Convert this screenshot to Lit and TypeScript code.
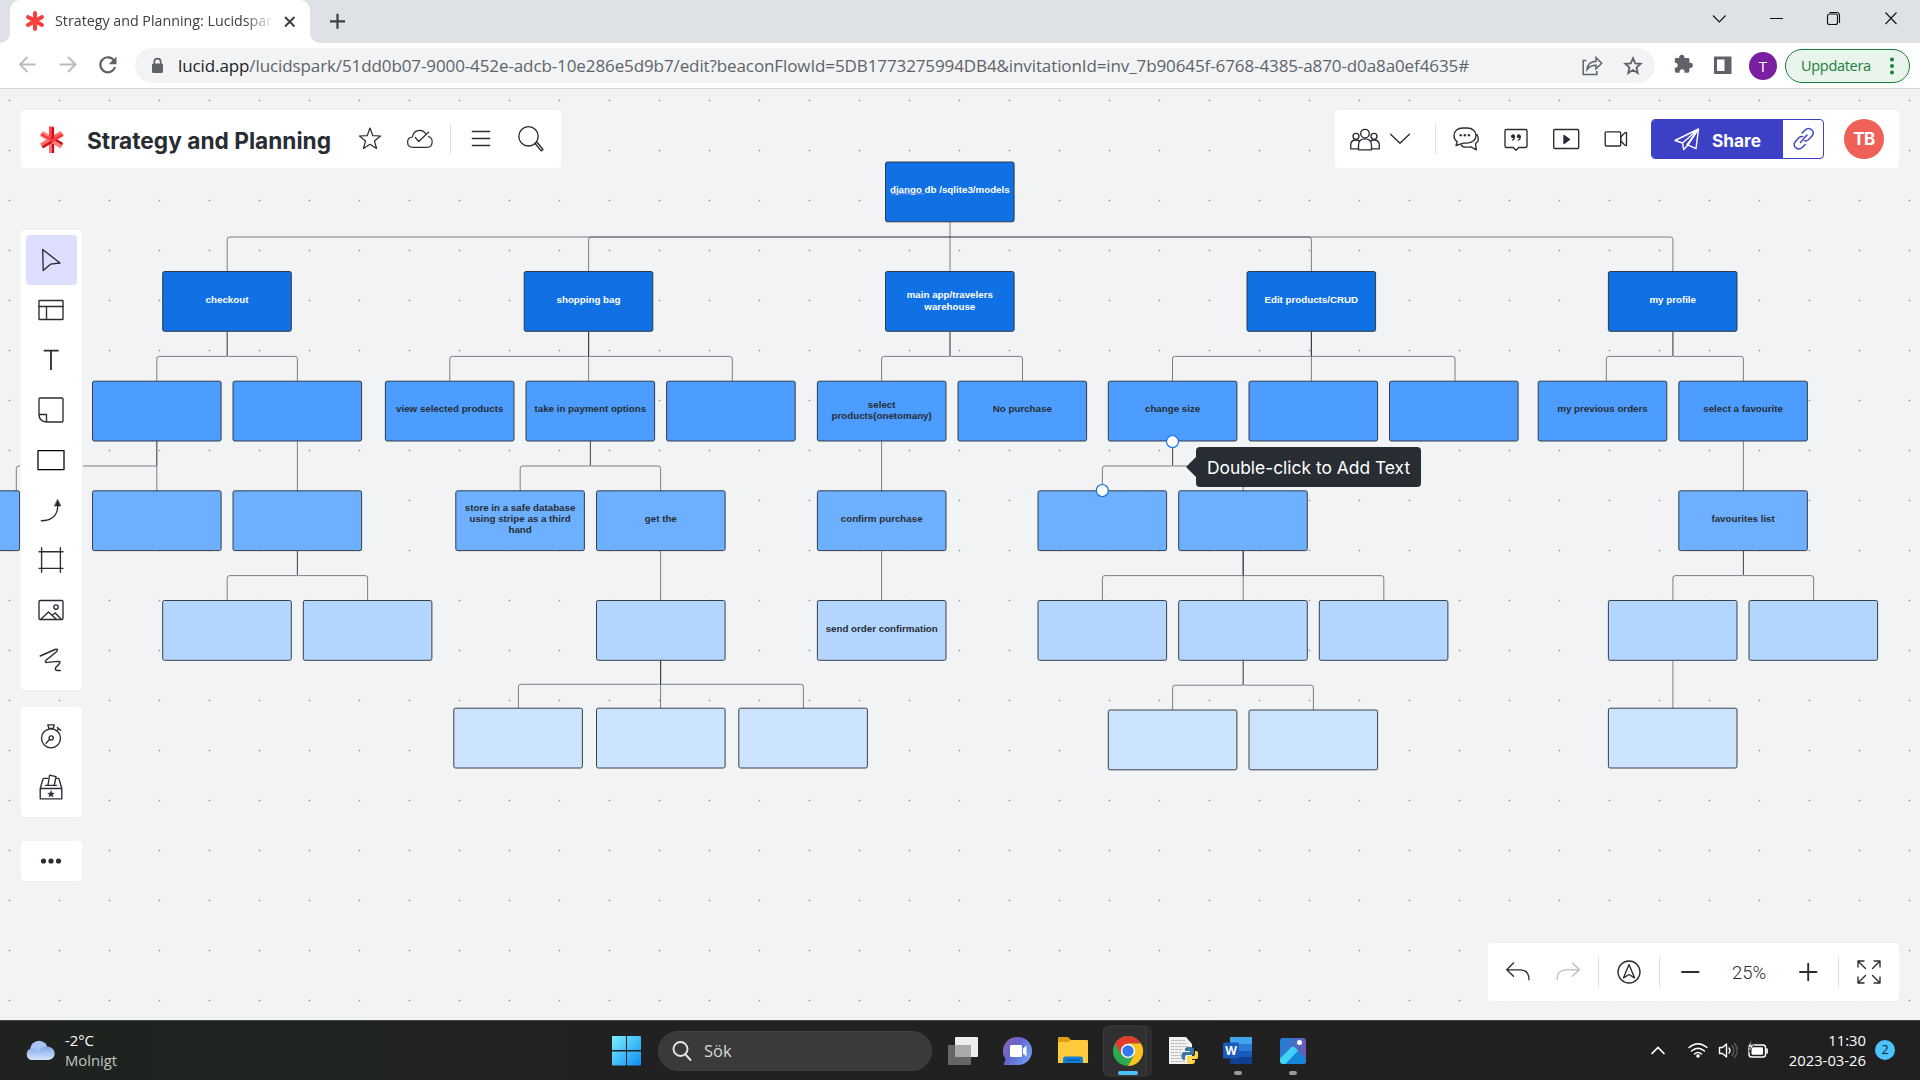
import { LitElement, html, css, svg } from "lit";
import { customElement } from "lit/decorators.js";

type Node = [x: number, y: number, level: number, lines?: string[]];

const W = 128.6;
const H = 59.8;
const FILLS = ["#1071e5", "#1071e5", "#4c9dff", "#6db0ff", "#b3d6ff", "#cde4ff"];
const BASE: Record<number, number[]> = { 1: [31.2], 2: [26.7, 38], 3: [19.7, 31, 42.6] };

const nodes: Node[] = [
  [885.5, 162, 0, ["django db /sqlite3/models"]],
  [162.7, 271.5, 1, ["checkout"]],
  [524.2, 271.5, 1, ["shopping bag"]],
  [885.5, 271.5, 1, ["main app/travelers", "warehouse"]],
  [1247, 271.5, 1, ["Edit products/CRUD"]],
  [1608.4, 271.5, 1, ["my profile"]],
  [92.5, 381.2, 2],
  [233, 381.2, 2],
  [385.4, 381.2, 2, ["view selected products"]],
  [526, 381.2, 2, ["take in payment options"]],
  [666.6, 381.2, 2],
  [817.4, 381.2, 2, ["select", "products(onetomany)"]],
  [958, 381.2, 2, ["No purchase"]],
  [1108.3, 381.2, 2, ["change size"]],
  [1249, 381.2, 2],
  [1389.5, 381.2, 2],
  [1538.2, 381.2, 2, ["my previous orders"]],
  [1678.8, 381.2, 2, ["select a favourite"]],
  [-109, 490.8, 3],
  [92.5, 490.8, 3],
  [233, 490.8, 3],
  [455.8, 490.8, 3, ["store in a safe database", "using stripe as a third", "hand"]],
  [596.5, 490.8, 3, ["get the"]],
  [817.4, 490.8, 3, ["confirm purchase"]],
  [1038, 490.8, 3],
  [1178.7, 490.8, 3],
  [1678.8, 490.8, 3, ["favourites list"]],
  [162.7, 600.5, 4],
  [303.3, 600.5, 4],
  [596.5, 600.5, 4],
  [817.4, 600.5, 4, ["send order confirmation"]],
  [1038, 600.5, 4],
  [1178.7, 600.5, 4],
  [1319.3, 600.5, 4],
  [1608.4, 600.5, 4],
  [1749, 600.5, 4],
  [453.8, 708.2, 5],
  [596.5, 708.2, 5],
  [738.8, 708.2, 5],
  [1108.3, 710, 5],
  [1249, 710, 5],
  [1608.4, 708.2, 5],
];

// [parent centre x, parent bottom, bus y, child top, child centre xs]
const links: [number, number, number, number, number[]][] = [
  [950, 222, 237, 271.5, [950]],
  [950, 237, 237, 271.5, [227.2, 588.6, 1311.4, 1672.9]],
  [227.2, 331.5, 356.4, 381, [156.8, 297.4]],
  [588.6, 331.5, 356.4, 381, [449.8, 588.6, 732.3]],
  [950, 331.5, 356.4, 381, [881.6, 1022.5]],
  [1311.4, 331.5, 356.4, 381, [1172.5, 1311.4, 1455]],
  [1672.9, 331.5, 356.4, 381, [1606.3, 1743.4]],
  [156.8, 441, 466, 491, [16.3, 156.8]],
  [297.4, 441, 466, 491, [297.4]],
  [590.4, 441, 466, 491, [520.2, 660.6]],
  [881.6, 441, 466, 491, [881.6]],
  [1172.6, 441, 466, 491, [1102.4, 1243.2]],
  [1743.4, 441, 466, 491, [1743.4]],
  [297.4, 551, 575.6, 600.5, [227.2, 367.6]],
  [660.6, 551, 575.6, 600.5, [660.6]],
  [881.6, 551, 575.6, 600.5, [881.6]],
  [1243.2, 551, 575.6, 600.5, [1102.4, 1243.2, 1383.8]],
  [1743.4, 551, 575.6, 600.5, [1672.9, 1813.6]],
  [660.6, 660.5, 684.3, 708.2, [518.4, 660.6, 803.4]],
  [1243.2, 660.5, 685.2, 710, [1172.6, 1313.4]],
  [1672.9, 660.5, 684.3, 708.2, [1672.9]],
];

const linkPath = (px: number, y0: number, bus: number, y1: number, cx: number) => {
  if (Math.abs(px - cx) < 1) return `M${px} ${y0}V${y1}`;
  const d = cx > px ? 2.5 : -2.5;
  const start = y0 < bus ? `M${px} ${y0}V${bus - 1}Q${px} ${bus} ${px + d / 2.5} ${bus}` : `M${px} ${bus}`;
  return `${start}H${cx - d}Q${cx} ${bus} ${cx} ${bus + 2.5}V${y1}`;
};

const ic = (body: unknown, w = 50, h = 50) =>
  html`<svg class="ic" width=${w} height=${h} viewBox="0 0 ${w} ${h}" fill="none" stroke="#282c33" stroke-width="1.35" stroke-linecap="round" stroke-linejoin="round">${body}</svg>`;

const sheet = css`
  :host { display: block; }
  * { box-sizing: border-box; }
  svg { display: block; flex: none; }
  .row { display: flex; align-items: center; }
`;

@customElement("browser-chrome")
export class BrowserChrome extends LitElement {
  static styles = [sheet, css`
    :host { height: 89px; background: #fff; border-bottom: 1px solid #d5d7da; font-family: "Open Sans", sans-serif; }
    .strip { height: 43px; background: #dee1e6; display: flex; align-items: stretch; }
    .corner { width: 10px; background: #fff; }
    .corner i { display: block; height: 100%; background: #dee1e6; }
    .corner.l i { border-bottom-right-radius: 10px; }
    .corner.r i { border-bottom-left-radius: 10px; }
    .tab { width: 300px; background: #fff; border-radius: 10px 10px 0 0; display: flex; align-items: center; padding: 0 10px 2px 15px; }
    .title { width: 220px; margin-left: 10px; overflow: hidden; white-space: nowrap; font-size: 14.25px; color: #3c4043;
      -webkit-mask-image: linear-gradient(90deg, #000 190px, transparent 219px); mask-image: linear-gradient(90deg, #000 190px, transparent 219px); }
    .close { margin-left: 6px; }
    .wins { margin-left: auto; }
    .bar { height: 45px; padding: 0 10px 0 7px; display: flex; align-items: center; }
    .nav { display: flex; padding-bottom: 2px; }
    .url { width: 1520px; height: 35px; margin-left: 8px; border-radius: 18px; background: #f1f3f4; display: flex; align-items: center; padding: 0 2px 0 12px; }
    .addr { width: 1393px; margin-left: 10px; white-space: nowrap; font-size: 17px; color: #5f6368; line-height: 34px; letter-spacing: -0.104px; }
    .addr b { font-weight: 400; color: #202124; }
    .me { width: 28px; height: 28px; border-radius: 50%; background: #7b1fa2; color: #fff; font-size: 15px; line-height: 28px; text-align: center; margin-left: 6px; }
    .upd { width: 125px; height: 34px; margin: 0 0 0 8px; border: 1.5px solid #188038; border-radius: 17px; background: #e9f4ec; color: #188038; font-size: 14.5px; letter-spacing: -0.3px; display: flex; align-items: center; padding-left: 15px; }
    .upd span { width: 86px; }
  `];
  render() {
    return html`
      <div class="strip">
        <div class="corner l"><i></i></div>
        <div class="tab">
          <svg width="20" height="22" viewBox="0 0 20 22" stroke="#ff3d3d" stroke-width="4" stroke-linecap="round"><path d="M10 3v16M3 7l14 8M17 7L3 15" /></svg>
          <span class="title">Strategy and Planning: Lucidspark</span>
          <svg class="close" width="20" height="20" viewBox="0 0 20 20" stroke="#3c4043" stroke-width="2"><path d="M5 6l9.500 9.500M14.500 6L5 15.500" /></svg>
        </div>
        <div class="corner r"><i></i></div>
        <svg width="36" height="42" viewBox="0 0 36 42" stroke="#3c4043" stroke-width="2.2"><path d="M17.500 13.800v15M10 21.300h15" /></svg>
        <svg class="wins" width="220" height="43" viewBox="0 0 220 43" fill="none" stroke="#111" stroke-width="1.1">
          <path d="M13 15.500l6.300 6.500 6.300-6.500M70 18.500h13M185.500 12.500l11 11.500M196.500 12.500l-11 11.500" />
          <rect x="127.500" y="14" width="10" height="10.500" rx="2" /><path d="M129.500 12.500h7a3 3 0 0 1 3 3v7.500" />
        </svg>
      </div>
      <div class="bar">
        <div class="nav">
          <svg width="40" height="43" viewBox="0 0 40 43" fill="none" stroke="#babcbe" stroke-width="2"><path d="M28.500 21.500h-15M20.500 14l-7.500 7.500 7.500 7.500" /></svg>
          <svg width="40" height="43" viewBox="0 0 40 43" fill="none" stroke="#babcbe" stroke-width="2"><path d="M12.500 21.500h15M21 14l7.500 7.500-7.500 7.500" /></svg>
          <svg width="40" height="43" viewBox="0 0 40 43" fill="none" stroke="#5f6368" stroke-width="2.200"><path d="M27 17.500A7.500 7.500 0 1 0 28 24" /><path d="M29.500 13.500v7.800h-7.800z" fill="#5f6368" stroke="none" /></svg>
        </div>
        <div class="url">
          <svg width="21" height="24" viewBox="0 0 21 24" fill="#5f6368"><rect x="5" y="9.500" width="11" height="9.500" rx="1.500" /><path d="M7.300 10V7.800a3.200 3.200 0 0 1 6.400 0V10" fill="none" stroke="#5f6368" stroke-width="1.700" /></svg>
          <span class="addr"><b>lucid.app</b>/lucidspark/51dd0b07-9000-452e-adcb-10e286e5d9b7/edit?beaconFlowId=5DB1773275994DB4&amp;invitationId=inv_7b90645f-6768-4385-a870-d0a8a0ef4635#</span>
          <svg width="40" height="34" viewBox="-2.500 0 40 34" fill="none" stroke="#5f6368" stroke-width="1.500"><path d="M13 11.500h-3.300v14h13.600v-3.500M13.500 20.500c.5-5 3.500-8 9-8.300V8.500l5.700 5.800-5.700 5.500v-3.500c-4 0-6.700 1-9 4.200z" /></svg>
          <svg width="40" height="34" viewBox="0 0 40 34" fill="none" stroke="#5f6368" stroke-width="1.800"><path d="M22 9.200l2.200 5.200 5.500.4-4.200 3.700 1.300 5.500-4.800-2.900-4.800 2.900 1.300-5.500-4.200-3.700 5.500-.4z" /></svg>
        </div>
        <svg width="50" height="44" viewBox="0 0.500 50 44" fill="#5f6368"><path d="M22 16h2.700v-.6a2.600 2.600 0 0 1 5.200 0v.6h3.600q1.400 0 1.400 1.400v3.300h.8a2.600 2.600 0 0 1 0 5.200h-.8v3.400q0 1.400-1.400 1.400h-3.400v-.9a2.500 2.500 0 0 0-5 0v.9h-3.400q-1.400 0-1.400-1.400v-3.500h.9a2.600 2.600 0 0 0 0-5.100h-.9v-3.300q0-1.400 1.700-1.400z" transform="translate(-.5 -1.500)" /></svg>
        <svg width="38" height="44" viewBox="0 0.500 38 44"><path d="M9 13h17.500v17.500H9z" fill="#5f6368" /><path d="M12 16h7.500v11.500H12z" fill="#fff" /></svg>
        <div class="me">T</div>
        <div class="upd"><span>Uppdatera</span><svg width="12" height="24" viewBox="0 0 12 24" fill="#188038"><circle cx="5" cy="5.500" r="2" /><circle cx="5" cy="12" r="2" /><circle cx="5" cy="18.500" r="2" /></svg></div>
      </div>`;
  }
}

@customElement("board-canvas")
export class BoardCanvas extends LitElement {
  static styles = [sheet, css`
    .label { font: 700 9.75px "Liberation Sans", Arial, sans-serif; text-anchor: middle; }
  `];
  render() {
    return html`<svg width="1920" height="931" viewBox="0 89 1920 931">
      <defs><pattern id="dots" x="0" y="0" width="50" height="50" patternUnits="userSpaceOnUse">
        <rect x="8" y="0" width="3" height="1" fill="#d3d5d8" /><rect x="9" y="0" width="1" height="1" fill="#96999d" /><rect x="9" y="1" width="1" height="1" fill="#d3d5d8" /><rect x="9" y="49" width="1" height="1" fill="#d3d5d8" />
      </pattern></defs>
      <rect x="0" y="89" width="1920" height="931" fill="#f1f3f5" /><rect x="0" y="89" width="1920" height="931" fill="url(#dots)" />
      <g fill="none" stroke="#282c33" stroke-width=".58">
        ${links.map(([px, y0, bus, y1, cs]) => cs.map((c) => svg`<path d=${linkPath(px, y0, bus, y1, c)} />`))}
      </g>
      ${nodes.map(([x, y, l, t]) => svg`
        <rect x=${x} y=${y} width=${W} height=${H} rx="1.8" fill=${FILLS[l]} stroke="#282c33" stroke-width=".9" />
        ${(t ?? []).map((s, i) => svg`<text class="label" x=${x + W / 2} y=${y + BASE[t!.length][i]} fill=${l < 2 ? "#fff" : "#282c33"}>${s}</text>`)}`)}
      <path d="M891 193.800h34" stroke="#8f93f0" stroke-width="1" />
      <g fill="#fff" stroke="#1071e5" stroke-width="1.200"><circle cx="1172.500" cy="441.500" r="6" /><circle cx="1102.300" cy="490.500" r="6" /></g>
    </svg>`;
  }
}

@customElement("board-header")
export class BoardHeader extends LitElement {
  static styles = [sheet, css`
    :host { display: flex; justify-content: space-between; font-family: Inter, sans-serif; }
    .panel { height: 58px; background: #fff; border-radius: 4px; display: flex; align-items: center; box-shadow: 0 0 0 1px #f1f3f5; }
    .left { width: 540px; }
    .right { width: 564px; padding-left: 5px; }
    h1 { width: 258px; margin: 2px 0 0 5px; font-size: 22.7px; font-weight: 700; color: #282c33; white-space: nowrap; }
    .div { width: 1px; height: 30px; margin: 0 5px; background: #dfe3e8; }
    .share { width: 173px; height: 40px; margin-left: 10px; display: flex; border: 1.5px solid #3c40c4; border-radius: 4px; overflow: hidden; }
    .go { width: 131px; background: #3c40c4; color: #fff; font-size: 17.3px; font-weight: 700; display: flex; align-items: center; }
    .go span { padding-top: 2px; }
    .av { width: 40px; height: 40px; margin-left: 20px; border-radius: 50%; background: #ef6059; color: #fff; font-size: 17px; font-weight: 700; line-height: 41px; text-align: center; letter-spacing: -0.6px; }
  `];
  render() {
    return html`
      <div class="panel left">
        <svg width="61" height="50" viewBox="0 0 61 50" fill="none">
          <path d="M20.500 32L41 19.500" stroke="#ff6a6a" stroke-width="5.600" />
          <path d="M20.500 19.500L41 32" stroke="#ff8080" stroke-width="5.600" />
          <path d="M30.500 12.500V26" stroke="#ff4545" stroke-width="5" />
          <path d="M30.500 26v13" stroke="#ff7070" stroke-width="5" />
          <path d="M32 13.500V24l-2 1.500M32 30v9" stroke="#cf0f16" stroke-width="2.200" />
          <path d="M31 27.500l-9.500 5.800M32.500 24.500L41.500 30" stroke="#cf0f16" stroke-width="2.200" />
          <path d="M42 20.500l-11 6-11-6.500" stroke="#ff3c3c" stroke-width="2.600" />
        </svg>
        <h1>Strategy and Planning</h1>
        ${ic(svg`<path d="M25 14l2.800 7.700 7.700.3-6 5 2 7.500-6.500-4.200-6.500 4.200 2-7.500-6-5 7.700-.3z" stroke-width="1.200" />`)}
        ${ic(svg`<path d="M33.500 22.600c5 .6 5.200 10.700-1.500 10.700H18c-7 0-7.200-9.600-.6-10.300 1-7.500 9.800-8.500 13-3.600M20.300 23.500l3.500 4 9.700-9.300" stroke-width="1.200" />`)}
        <i class="div"></i>
        ${ic(svg`<path d="M16.300 17.500h17.400M16.300 24.500h17.400M16.300 31.500h17.400" />`)}
        ${ic(svg`<circle cx="22.500" cy="22.300" r="9.700" /><path d="M29 29.500l1.800-1.500 6.200 7.500-1.700 1.400z" />`)}
      </div>
      <div class="panel right">
        ${ic(svg`<circle cx="25" cy="19.600" r="4.300" /><circle cx="16" cy="22.300" r="3" /><circle cx="34" cy="22.300" r="3" /><path d="M18.500 35.800v-4.500c0-4.500 2-6.500 6.500-6.500s6.500 2 6.500 6.500v4.500zM18 34.800h-7.300v-3.500c0-3.500 1.700-5.300 5-5.300 1.500 0 2.600.3 3.400.9M32 34.800h7.300v-3.500c0-3.500-1.700-5.300-5-5.300-1.500 0-2.600.3-3.400.9" />`)}
        ${ic(svg`<path d="M.6 20.300l9.400 9 9.400-9" />`, 40)}
        <i class="div"></i>
        ${ic(svg`<path d="M15 31.500l1.200-3.700C14.200 26.300 13 24.400 13 21.500c0-4 3.300-7.500 9-7.500h4c5.700 0 9 3.500 9 7.500s-3.300 7.600-9 7.600h-3.500L15 31.500zM36 20.500c2 3.600 1.700 7-1.500 9.300l.8 6-5.300-3c-5 .8-8.500.2-9.500-1.500" /><g fill="#282c33" stroke="none"><circle cx="19.700" cy="21.300" r="1.200" /><circle cx="23.800" cy="21.300" r="1.200" /><circle cx="27.900" cy="21.300" r="1.200" /></g>`)}
        ${ic(svg`<path d="M15.500 15.500h19q1.500 0 1.500 1.500v15q0 1.500-1.500 1.500h-6.700L25 36.300l-2.800-2.800h-6.700q-1.500 0-1.500-1.500V17q0-1.500 1.500-1.500z" /><g fill="#282c33" stroke="none"><circle cx="22" cy="22.300" r="2" /><circle cx="27.800" cy="22.300" r="2" /></g><path d="M23.400 22.500q.2 2.700-2 3.700M29.200 22.500q.2 2.700-2 3.700" stroke-width="1.200" />`)}
        ${ic(svg`<rect x="12.700" y="15.500" width="25" height="19" rx="1" /><path d="M23 21.500l5.500 4-5.500 4z" fill="#282c33" />`)}
        ${ic(svg`<rect x="14.200" y="17.800" width="15.500" height="14.200" rx="1" /><path d="M29.700 23l3.800-3.800q2-1.500 2-.2v12q0 1.300-2-.2L29.700 27z" />`)}
        <div class="share">
          <div class="go">
            <svg width="60" height="37" viewBox="0 0 60 37" fill="none" stroke="#fff" stroke-width="1.400" stroke-linejoin="round"><path d="M46.500 8L23 19.500l7.500 2.500zM46.500 8l-16 14 1.200 6.500 4-4.200zM46.500 8L35 23.700l9 4z" /></svg><span>Share</span>
          </div>
          <svg width="40" height="37" viewBox="0 0 40 37" fill="none" stroke="#3c40c4" stroke-width="1.400" stroke-linecap="round"><path d="M17.500 22.500l6.500-7.500M19 13l3.200-3c4.500-4 10.500 1.300 6.800 6l-3.500 3.800c-1.200 1-2.700 1.400-4 1.100M22.300 24.500l-3.100 3c-4.500 4-10.500-1.300-6.800-6l3.500-3.800c1.200-1 2.700-1.400 4-1.100" /></svg>
        </div>
        <div class="av">TB</div>
      </div>`;
  }
}

@customElement("tool-rail")
export class ToolRail extends LitElement {
  static styles = [sheet, css`
    :host { display: flex; flex-direction: column; width: 61px; }
    .panel { background: #fff; border-radius: 4px; padding: 5px; box-shadow: 0 0 0 1px #f1f3f5; }
    .mid { margin-top: 17px; }
    .more { margin-top: 24px; height: 40px; padding: 0 5px; }
    .on { background: #dedeff; border-radius: 4px; }
  `];
  render() {
    return html`
      <div class="panel">
        <div class="on">${ic(svg`<path d="M16.700 14.500L34 28l-9.500 1.200-7.300 6.300z" />`)}</div>
        ${ic(svg`<rect x="13" y="15.500" width="24" height="19" rx=".5" /><path d="M13 21.500h24M20.500 21.500v13" />`)}
        ${ic(svg`<path d="M18.600 15.700h13.200M25 15.700v18.500" stroke-width="1.800" stroke-linecap="square" />`)}
        ${ic(svg`<path d="M14 13h22q1 0 1 1v22q0 1-1 1H20.500q-7.500-.5-7.500-7.500V14q0-1 1-1zM13 29.500h7.500V37" />`)}
        ${ic(svg`<path d="M12 15.500h26v19H12z" stroke="#000" stroke-width="1.250" />`)}
        ${ic(svg`<path d="M15.300 35.700c10 0 16.400-5 16.400-15" /><path d="M31.700 14.500l3.200 6.500h-6.400z" fill="#282c33" stroke-width=".5" />`)}
        ${ic(svg`<path d="M15.600 12.700v24.600M34.400 12.700v24.600M13 16.700h24M13 33.300h24" />`)}
        ${ic(svg`<rect x="13" y="15.500" width="24" height="19" rx="1.200" /><circle cx="30" cy="22" r="2.200" /><path d="M15 34l7.500-7 7.500 7M26.500 30l2.700-2 5.800 6" />`)}
        ${ic(svg`<path d="M14.200 21L29 14.500c2.500-.8 3.200.4 1.500 2.200L20.300 25c-1.700 1.700-1 2.500.8 2.400l11-1c2.300 0 2.400.8 1 2.600l-3.300 3.500c-1.200 2-.6 3.200 4.500 3" stroke-width="1.450" />`)}
      </div>
      <div class="panel mid">
        ${ic(svg`<circle cx="25" cy="26.300" r="9.500" /><circle cx="25.200" cy="26" r="2.100" /><path d="M23.500 27.500l-3.500 3.700M21.800 12.800h6.500l-1 3.500h-4.500zM31.300 15.500l3.400 2.800M32.500 16.500l-1.300 1.800" />`)}
        ${ic(svg`<path d="M14.200 26.500h21.600v10.300H14.200zM14.200 26.500L17 17q.2-.6 1-.6h3.500M35.800 26.500L33 17q-.2-.6-1-.6h-2.300M19.500 23.300h11M22 23l1.600-9.800 6.400 1.500-1.700 8.300" /><path d="M25 28.800l1 2.200 2.300.2-1.800 1.500.6 2.300-2.100-1.200-2.100 1.200.6-2.300-1.800-1.500 2.300-.2z" fill="#282c33" stroke-width=".4" />`)}
      </div>
      <div class="panel more">${ic(svg`<g fill="#282c33" stroke="none"><circle cx="17.500" cy="20" r="2.600" /><circle cx="25" cy="20" r="2.600" /><circle cx="32.500" cy="20" r="2.600" /></g>`, 50, 40)}</div>`;
  }
}

@customElement("zoom-bar")
export class ZoomBar extends LitElement {
  static styles = [sheet, css`
    :host { display: flex; align-items: center; width: 411px; height: 58px; padding: 0 5px; background: #fff; border-radius: 4px; }
    .div { width: 1px; height: 30px; margin: 0 5px; background: #d9dce4; }
    .pct { width: 68px; padding-top: 2px; text-align: center; font: 300 18.5px Roboto, sans-serif; color: #282c33; }
  `];
  render() {
    return html`
      ${ic(svg`<path d="M20.500 16l-6.800 6.800 6.800 6.500M14 22.800h13c6.500 0 9 4 9 10" />`)}
      <svg width="50" height="50" viewBox="0 0 50 50" fill="none" stroke="#b9bcc0" stroke-width="1.350" stroke-linecap="round" stroke-linejoin="round"><path d="M29.500 16l6.800 6.800-6.800 6.500M36 22.800H23c-6.500 0-9 4-9 10" /></svg>
      <i class="div"></i>
      ${ic(svg`<circle cx="25" cy="25" r="11" /><path d="M25 17.500l5.500 13.300-5.500-3.300-5.500 3.300z" />`)}
      <i class="div"></i>
      ${ic(svg`<path d="M17 25h16.500" stroke-width="1.900" />`)}
      <span class="pct">25%</span>
      ${ic(svg`<path d="M17 25h16.500M25.200 16.800v16.500" stroke-width="1.900" />`)}
      <i class="div"></i>
      ${ic(svg`<path d="M21.500 21.500l-7.300-7.300M14 20v-6h6M28.500 21.500l7.300-7.300M36 20v-6h-6M21.500 28.500l-7.300 7.300M14 30v6h6M28.500 28.500l7.300 7.300M36 30v6h-6" />`)}`;
  }
}

@customElement("task-bar")
export class TaskBar extends LitElement {
  static styles = [sheet, css`
    :host { height: 60px; background: linear-gradient(90deg, #1f221f, #1f2420 15%, #212121 30%, #202020); border-top: 1px solid #434846; display: grid; grid-template-columns: 612px 741px 1fr; font-family: "Open Sans", sans-serif; color: #fff; font-size: 14.8px; }
    .wx { padding-left: 24px; line-height: 20px; }
    .wx div { margin: -2px 0 0 9px; }
    .wx span { display: block; color: #c3c6c3; }
    .find { width: 274px; height: 40px; margin: 0 10px 0 16px; border-radius: 20px; background: #3a3a3a; border: 1px solid #404040; display: flex; align-items: center; font-size: 16.500px; color: #d8d8d8; }
    .app { width: 55px; height: 58px; display: flex; justify-content: center; align-items: center; }
    .views { width: 42px; margin-right: 6px; }
    .active { margin-left: 2px; }
    .tray { justify-content: flex-end; padding-right: 25px; }
    .time { width: 80px; margin: -2px 9px 0 6px; text-align: right; line-height: 20px; }
    .n { width: 20px; height: 20px; margin-top: -2px; border-radius: 50%; background: #4cc2ff; color: #10222c; font-size: 12.5px; line-height: 20px; text-align: center; }
  `];
  render() {
    return html`
      <div class="wx row">
        <svg width="32" height="24" viewBox="0 1 32 24"><defs><linearGradient id="c" x1="0" y1="0" x2="0" y2="1"><stop offset="0" stop-color="#7fa6ea" /><stop offset="1" stop-color="#d5e3fb" /></linearGradient></defs><circle cx="15" cy="11.500" r="8.800" fill="#a9c5f4" /><path d="M7 22a6 6 0 0 1 0-11.500c4-.5 6 1.500 8 3 1-3 4-5 8-5 10 .5 10 13 1 13.500z" fill="url(#c)" /></svg>
        <div>-2°C<span>Molnigt</span></div>
      </div>
      <div class="row">
        <svg width="30" height="30" viewBox="0 0 30 30"><defs><linearGradient id="w" x1="0" y1="0" x2="1" y2="1"><stop offset="0" stop-color="#7df0ff" /><stop offset="1" stop-color="#0a8df5" /></linearGradient></defs><path d="M1 0h13v14H0V1q0-1 1-1zM15 0h13q1 0 1 1v13H15zM0 15.500h14v14H1q-1 0-1-1zM15 15.500h14v13q0 1-1 1H15z" fill="url(#w)" /></svg>
        <div class="find"><svg width="45" height="40" viewBox="0 0 45 40" fill="none" stroke="#e6e6e6" stroke-width="1.900" stroke-linecap="round"><circle cx="21.500" cy="18" r="7" /><path d="M26.500 23.500l5 5.500" /></svg>Sök</div>
        <div class="app views"><svg width="30" height="28" viewBox="0 0 30 28"><rect y="8" width="23" height="20" rx="1" fill="#666" /><rect x="7" width="23" height="20" rx="1" fill="#ededed" /><rect x="7" y="8" width="16" height="12" fill="#aaa" /></svg></div>
        <div class="app"><svg width="30" height="30" viewBox="0 0 30 30"><defs><linearGradient id="t" x1="0" y1="0" x2="1" y2=".6"><stop offset="0" stop-color="#8e62a8" /><stop offset=".5" stop-color="#6468cf" /><stop offset="1" stop-color="#6f9cf0" /></linearGradient></defs><path d="M15 1a14 14 0 1 1 0 28H1.500q-1.500-.5-.5-1.500l1.500-4.500A14 14 0 0 1 15 1z" fill="url(#t)" /><rect x="7" y="9" width="12" height="12" rx="1.500" fill="#fff" /><path d="M20 12.500l3.500-3v11l-3.500-3z" fill="#fff" /></svg></div>
        <div class="app"><svg width="30" height="28" viewBox="0 0 30 28"><path d="M0 1q0-1 1-1h9l3 3v5H0z" fill="#e0a010" /><path d="M0 5h10l3-2h16q1 0 1 1v22H0z" fill="#ffcb3d" /><path d="M5 26v-4q0-2.500 2.500-2.500h15q2.500 0 2.500 2.500v4z" fill="#1180d4" /><path d="M8.500 23h13" stroke="#0a4f94" stroke-width="1.200" /></svg></div>
        <svg class="active" width="53" height="58" viewBox="0 0 53 58"><path d="M40 4h4q5 0 5 5v40q0 5-5 5h-4" fill="#2a2a2a" stroke="#383838" /><rect x="1.500" y="4" width="43" height="50" rx="5" fill="#303030" stroke="#3e3e3e" />
          <g transform="translate(26 29)"><circle r="15" fill="#2da94f" /><path d="M0 0L-13-7.500A15 15 0 0 1 13-7.500H0z" fill="#e33b2e" /><path d="M0-7.500H13A15 15 0 0 1 0 15L6.500 3.700z" fill="#fcc31e" /><path d="M-13-7.500L-6.500 3.700 0 0z" fill="#e33b2e" /><circle r="7.200" fill="#fff" /><circle r="5.700" fill="#3479ec" /></g>
          <rect x="16" y="49" width="20" height="4" rx="2" fill="#4cc2ff" /></svg>
        <div class="app"><svg width="30" height="30" viewBox="0 0 30 30"><path d="M1 1h17l6 7v20H1z" fill="#f1f1f1" /><path d="M3 4.500h14M3 7.500h16M3 10.500h17M3 13.500h12M3 16.500h10M3 19.500h10M3 22.500h10M3 25.500h14" stroke="#b9b9b9" stroke-dasharray="3 .8" /><path d="M21 11c-4 0-4 1.500-4 4h5v1h-6c-3.500 0-3.500 8 0 8h1v-3q0-2 2-2h5q2 0 2-2v-3.500c0-2-2-2.500-5-2.500z" fill="#3a76a8" /><path d="M23 28c4 0 4-1.500 4-4h-5v-1h6c3.500 0 3.500-8 0-8h-1v3q0 2-2 2h-4q-2 0-2 2v3.500c0 2 1 2.500 4 2.500z" fill="#ffd445" /></svg></div>
        <svg width="55" height="58" viewBox="0 0 55 58"><path d="M20 15h22v7H20z" fill="#41a5ee" /><path d="M20 22h22v7H20z" fill="#2b7cd3" /><path d="M20 29h22v6.500H20z" fill="#185abd" /><path d="M20 35.500h22V42H20z" fill="#103f91" /><rect x="13" y="20.500" width="16" height="16" rx="1" fill="#185abd" /><text x="21" y="33" text-anchor="middle" font-family="Open Sans, sans-serif" font-size="12" font-weight="700" fill="#fff">W</text><rect x="24" y="49" width="8" height="4" rx="2" fill="#9a9a9a" /></svg>
        <svg width="55" height="58" viewBox="0 0 55 58"><defs><linearGradient id="p" x1="0" y1="0" x2="1" y2=".3"><stop offset="0" stop-color="#1883d8" /><stop offset="1" stop-color="#6a5cb8" /></linearGradient></defs><rect x="15" y="16" width="26" height="26" rx="3" fill="url(#p)" /><path d="M20 42L31 28.500q1-1 2 0l8 8.500v2q0 3-3 3z" fill="#1687d8" /><path d="M15 36.500l10.500-10.500q2.500-2.300 5 0l2.500 2.500L20.500 42H18q-3 0-3-3z" fill="#3fd3f7" /><circle cx="34.500" cy="20.500" r="2.500" fill="#fff" /><rect x="24" y="49" width="8" height="4" rx="2" fill="#9a9a9a" /></svg>
      </div>
      <div class="row tray">
        <svg width="144" height="40" viewBox="0 0 144 40" fill="none" stroke="#fff" stroke-width="1.700" stroke-linecap="round">
          <path d="M16 22.500l6-6 6 6" />
          <path d="M53 16.500q9-7.500 18 0M55.500 20q6.500-5.500 13 0M58.500 23q3.500-3 7 0" stroke-width="1.500" /><circle cx="62" cy="25" r="1.800" fill="#fff" stroke="none" />
          <path d="M83.500 16.500h3l4-3.500v13l-4-3.500h-3z" stroke-width="1.400" stroke-linejoin="round" /><path d="M93 17q2 2.500 0 5" stroke-width="1.400" /><path d="M96 14.500q4 5 0 10M98.500 12.500q5.500 7 0 14" stroke="#5a5a5a" stroke-width="1.400" />
          <rect x="113" y="14" width="16.500" height="12" rx="2.500" stroke-width="1.400" /><rect x="115.500" y="16.300" width="11.500" height="7.400" rx="1" fill="#fff" stroke="none" /><path d="M131 18v4" /><path d="M115.500 9l-4 7h3l-1.500 5 5-7h-3.200z" fill="#fff" stroke="#202020" stroke-width=".7" />
        </svg>
        <div class="time">11:30<br />2023-03-26</div>
        <div class="n">2</div>
      </div>`;
  }
}

@customElement("app-root")
export class AppRoot extends LitElement {
  static styles = [sheet, css`
    :host { display: grid; grid-template-rows: 89px 931px 60px; width: 1920px; height: 1080px; overflow: hidden; }
    .board { position: relative; overflow: hidden; }
    .over { position: absolute; inset: 0; display: flex; flex-direction: column; padding: 21px; }
    tool-rail { margin-top: 62px; }
    zoom-bar { margin: auto 0 -2px auto; }
    .tip { position: absolute; left: 1196px; top: 358px; width: 225px; height: 40px; background: #282c33; border-radius: 4px; color: #fff; font: 17.4px/42px Inter, sans-serif; text-align: center; white-space: nowrap; }
    .tip::before { content: ""; position: absolute; left: -10px; top: 10px; border: 10px solid transparent; border-left: 0; border-right-color: #282c33; }
  `];
  render() {
    return html`
      <browser-chrome></browser-chrome>
      <div class="board">
        <board-canvas></board-canvas>
        <div class="over"><board-header></board-header><tool-rail></tool-rail><zoom-bar></zoom-bar></div>
        <div class="tip">Double-click to Add Text</div>
      </div>
      <task-bar></task-bar>`;
  }
}
